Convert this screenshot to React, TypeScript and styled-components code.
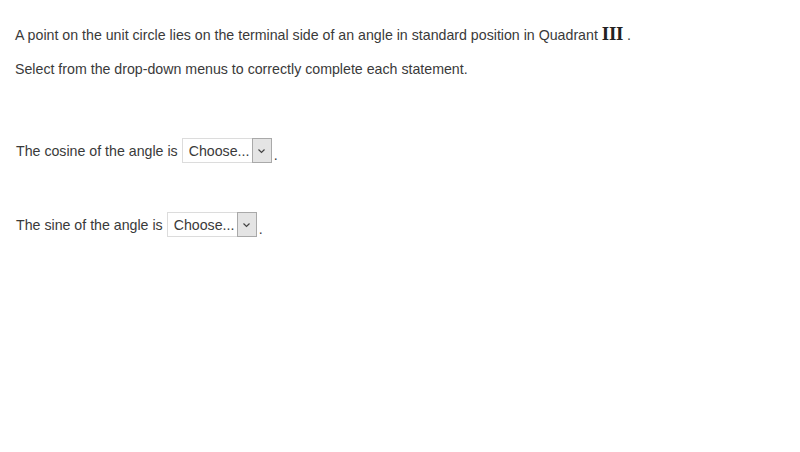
import React from "react";
import styled, { createGlobalStyle } from "styled-components";

const Global = createGlobalStyle`
  html, body { margin: 0; padding: 0; background: #fff; }
  body { font-family: "Liberation Sans", Arial, sans-serif; color: #333; }
`;

const Page = styled.div`
  padding: 24px 15px 0 15px;
  display: flex;
  flex-direction: column;
`;

const Para = styled.p<{ $mt?: number }>`
  margin: ${(p) => p.$mt ?? 0}px 0 0 0;
  font-size: 14.2px;
  line-height: 20px;
  color: #3a3a3a;
`;

const Roman = styled.span`
  font-family: "Liberation Serif", "Times New Roman", serif;
  font-size: 19px;
  font-weight: bold;
  color: #222;
  letter-spacing: -0.3px;
`;

const Statement = styled.div<{ $mt: number }>`
  margin-top: ${(p) => p.$mt}px;
  display: flex;
  align-items: center;
  font-size: 14.2px;
  color: #3a3a3a;
  padding-left: 1px;
`;

const SelectBox = styled.div`
  margin-left: 4px;
  width: 90px;
  height: 25px;
  border: 1px solid #dcdcdc;
  display: flex;
  align-items: stretch;
  background: #fff;
  box-sizing: border-box;
`;

const SelectLabel = styled.span`
  flex: 1;
  display: flex;
  align-items: center;
  padding-left: 6px;
  font-size: 14.2px;
  color: #3a3a3a;
`;

const Arrow = styled.span`
  width: 18px;
  margin: -1px -1px -1px 0;
  background: #e4e4e4;
  border: 1px solid #a9a9a9;
  display: flex;
  align-items: center;
  justify-content: center;
`;

const Dot = styled.span`
  margin-left: 2px;
  align-self: flex-end;
  line-height: 16px;
`;

function Dropdown() {
  return (
    <SelectBox>
      <SelectLabel>Choose...</SelectLabel>
      <Arrow>
        <svg width="9" height="6" viewBox="0 0 9 6">
          <path d="M1.5 1.5 L4.5 4.5 L7.5 1.5" fill="none" stroke="#444" strokeWidth="1.2" />
        </svg>
      </Arrow>
    </SelectBox>
  );
}

export default function App() {
  return (
    <>
      <Global />
      <Page>
        <Para>
          A point on the unit circle lies on the terminal side of an angle in standard position in Quadrant{" "}
          <Roman>III</Roman> .
        </Para>
        <Para $mt={14}>Select from the drop-down menus to correctly complete each statement.</Para>
        <Statement $mt={59}>
          The cosine of the angle is
          <Dropdown />
          <Dot>.</Dot>
        </Statement>
        <Statement $mt={49}>
          The sine of the angle is
          <Dropdown />
          <Dot>.</Dot>
        </Statement>
      </Page>
    </>
  );
}
